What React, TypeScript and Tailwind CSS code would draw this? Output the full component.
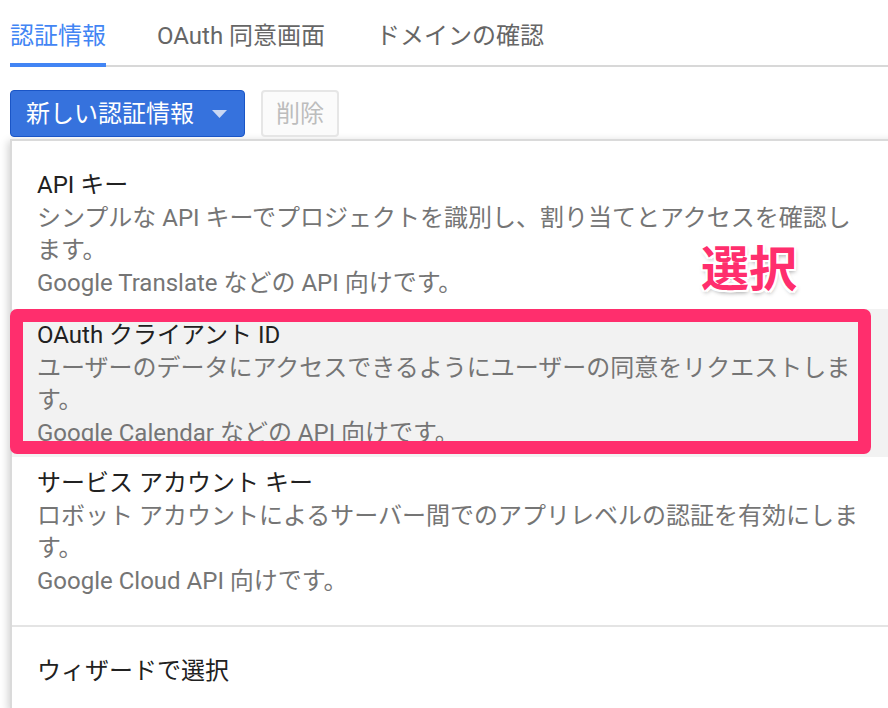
import React from 'react';

const items = [
  {
    title: 'API キー',
    lines: [
      'シンプルな API キーでプロジェクトを識別し、割り当てとアクセスを確認し',
      'ます。',
      'Google Translate などの API 向けです。',
    ],
    active: false,
  },
  {
    title: 'OAuth クライアント ID',
    lines: [
      'ユーザーのデータにアクセスできるようにユーザーの同意をリクエストしま',
      'す。',
      'Google Calendar などの API 向けです。',
    ],
    active: true,
  },
  {
    title: 'サービス アカウント キー',
    lines: [
      'ロボット アカウントによるサーバー間でのアプリレベルの認証を有効にしま',
      'す。',
      'Google Cloud API 向けです。',
    ],
    active: false,
  },
];

const App = () => {
  return (
    <div className="relative w-[888px] h-[708px] overflow-hidden bg-white font-['Roboto','Noto_Sans_CJK_JP',sans-serif] text-[24px]">
      {/* Tabs */}
      <div className="ml-[10px] flex gap-[51px] border-b-2 border-[#d8d8d8]">
        <div className="pt-[20px] pb-[11px] leading-[32px] border-b-4 border-[#4285f4] text-[#4285f4] -mb-[2px]">
          認証情報
        </div>
        <div className="pt-[20px] pb-[11px] leading-[32px] border-b-4 border-transparent text-[#666666] -mb-[2px]">
          OAuth 同意画面
        </div>
        <div className="pt-[20px] pb-[11px] leading-[32px] border-b-4 border-transparent text-[#666666] -mb-[2px]">
          ドメインの確認
        </div>
      </div>

      {/* Buttons */}
      <div className="ml-[10px] mt-[23px] flex gap-[16px]">
        <button className="h-[47px] w-[235px] flex items-center pl-[15px] rounded-[4px] border border-[#1a55c6] bg-[#3672dd] text-white leading-none">
          <span>新しい認証情報</span>
          <svg className="ml-[18px]" width="15" height="8" viewBox="0 0 15 8">
            <polygon points="0,0 15,0 7.5,8" fill="#c9d7f3" />
          </svg>
        </button>
        <button className="h-[47px] w-[78px] flex items-center justify-center rounded-[4px] border-2 border-[#e6e6e6] bg-[#fbfbfb] text-[#bdbdbd] leading-none">
          削除
        </button>
      </div>

      {/* Dropdown menu */}
      <div className="ml-[10px] mt-[2px] w-[900px] border-t-2 border-l-2 border-b-2 border-[#dadada] bg-white shadow-[-2px_2px_8px_rgba(0,0,0,0.18)]">
        <div className="pt-[18px] pb-[20px]">
          {items.map((item, i) => (
            <div
              key={i}
              className={`pl-[25px] leading-[32.5px] ${item.active ? 'bg-[#f2f2f2]' : ''} ${i === 0 ? 'pt-[10px] pb-[10px]' : 'pt-[10px] pb-[8px]'}`}
            >
              <div className="text-[#212121]">{item.title}</div>
              {item.lines.map((line, j) => (
                <div key={j} className="text-[#757575] whitespace-nowrap">
                  {line}
                </div>
              ))}
            </div>
          ))}
        </div>
        <div className="border-t-2 border-[#e4e4e4] pl-[25px] pt-[28px] pb-[20px] leading-[33px] text-[#212121]">
          ウィザードで選択
        </div>
      </div>

      {/* Annotation */}
      <div className="absolute left-[10px] top-[309px] w-[861px] h-[145px] border-[13px] border-[#ff2e6d] rounded-[7px]" />
      <div className="absolute left-[701px] top-[246px] text-[48px] leading-none font-bold text-[#ff2e6d] [text-shadow:2px_0_0_#fff,-2px_0_0_#fff,0_2px_0_#fff,0_-2px_0_#fff,2px_2px_0_#fff,-2px_-2px_0_#fff,2px_-2px_0_#fff,-2px_2px_0_#fff,1px_3px_4px_rgba(0,0,0,0.35)]">
        選択
      </div>
    </div>
  );
};

export default App;
